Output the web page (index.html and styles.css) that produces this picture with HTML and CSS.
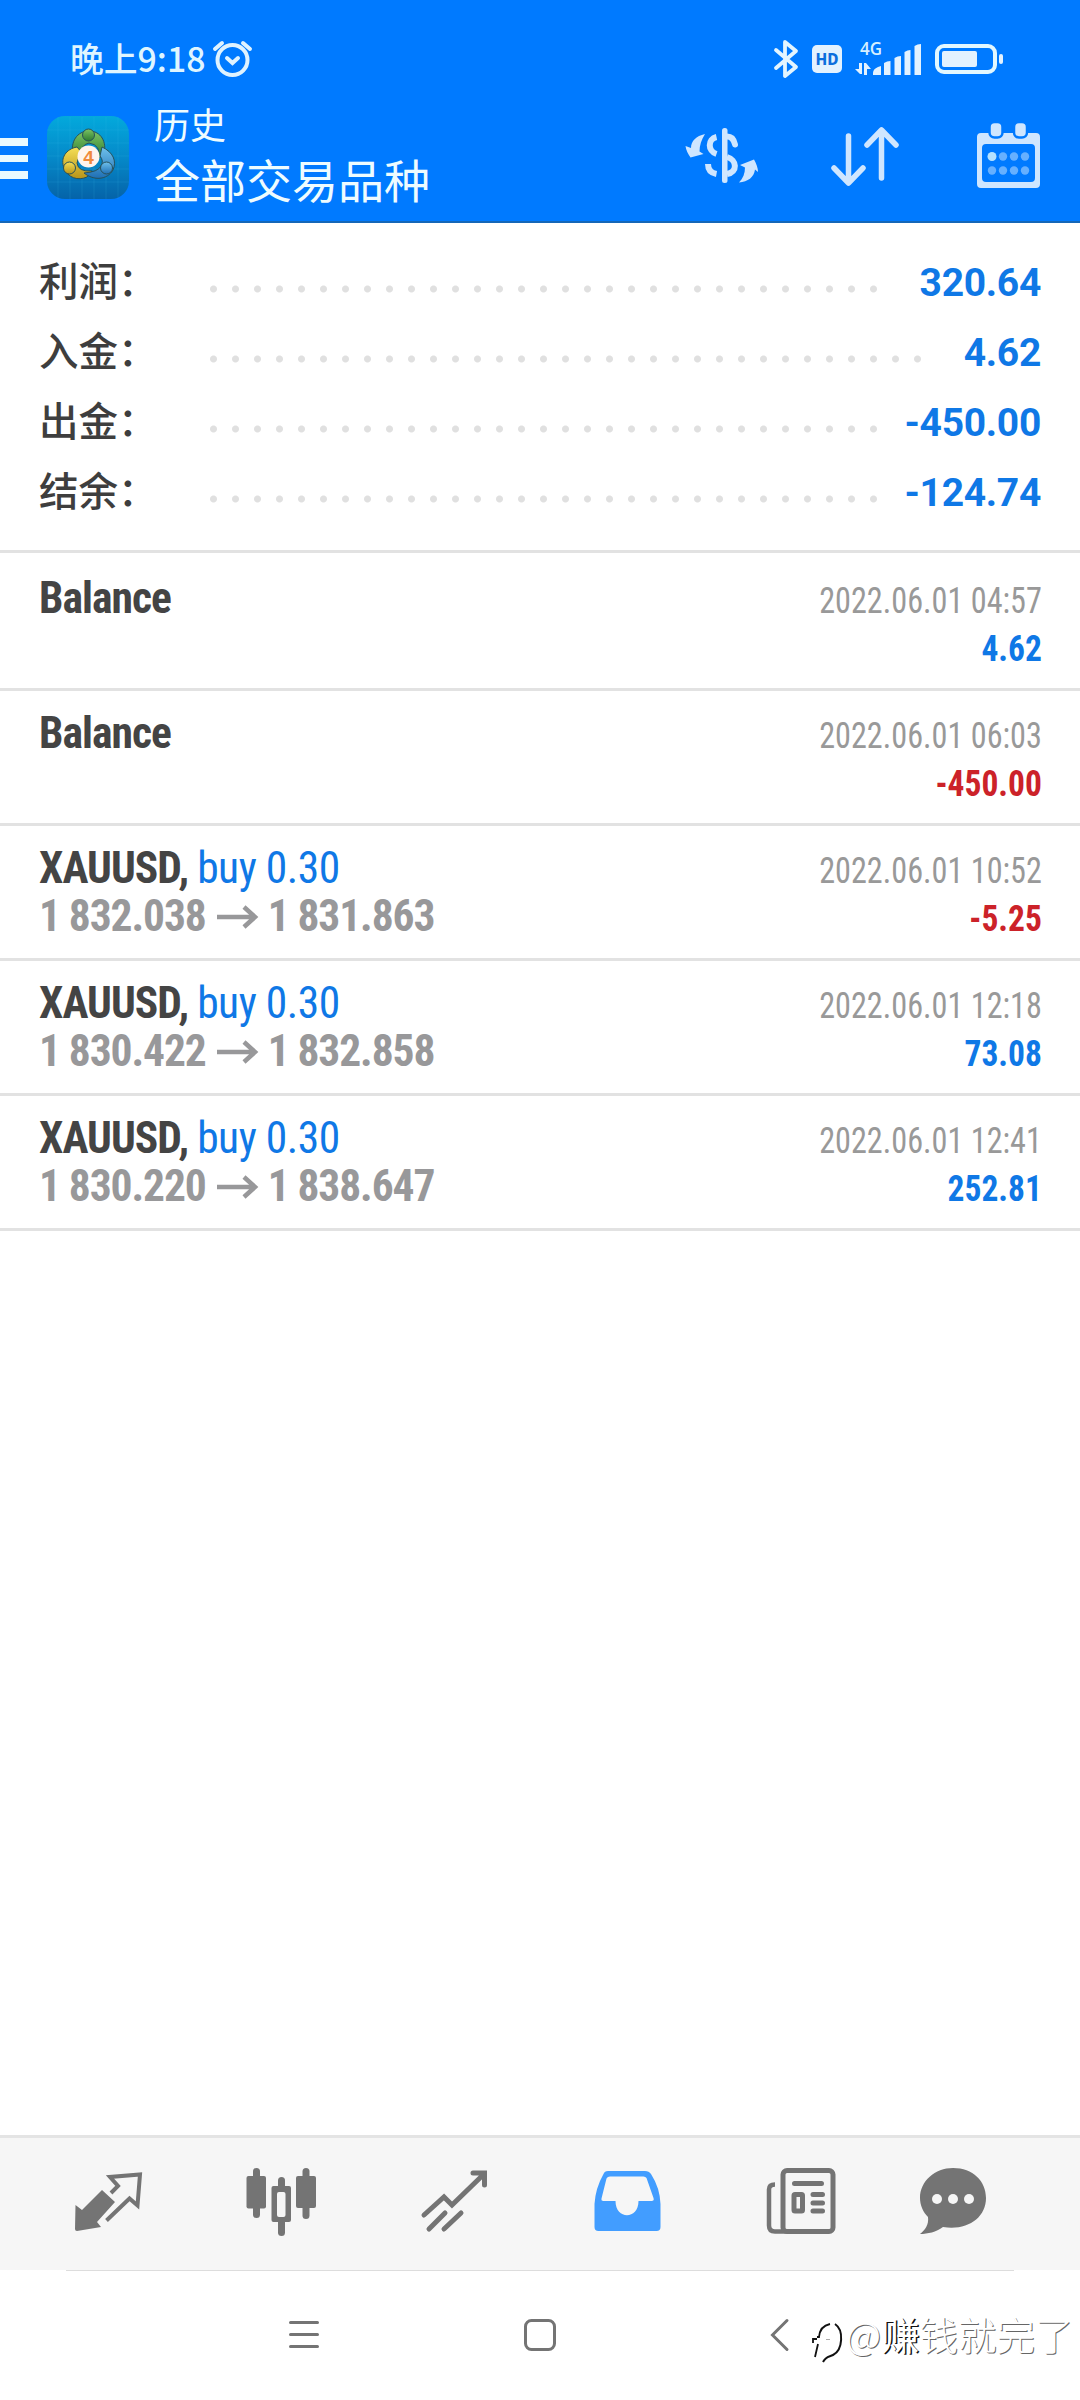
FILE: index.html
```html
<!DOCTYPE html>
<html lang="zh-CN">
<head>
<meta charset="utf-8">
<title>历史</title>
<link rel="stylesheet" href="styles.css">
</head>
<body>
<div class="screen">
  <header class="header">
    <div class="status">
      <span class="clock">晚上9:18</span>
      <svg class="alarm" width="42" height="42" viewBox="211 38 42 42" fill="none" stroke="#dff3ff" stroke-width="4" stroke-linecap="round"><circle cx="232.500" cy="60" r="15"/><path d="M227 58l5.500 5 5.500-5M215 49l7-6M243 43l7 6"/></svg>
      <svg class="signals" width="236" height="58" viewBox="770 26 236 58">
        <path d="M776 50l20 17-11 9V42l11 9-20 17" fill="none" stroke="#e3f5ff" stroke-width="3.800" stroke-linejoin="round" stroke-linecap="round"/>
        <rect x="812" y="45" width="30" height="28" rx="5" fill="#e3f2ff"/>
        <text x="827" y="65" class="hd" textLength="23" lengthAdjust="spacingAndGlyphs">HD</text>
        <text x="860" y="54.500" class="net" textLength="22" lengthAdjust="spacingAndGlyphs">4G</text>
        <g fill="#e3f2ff"><path d="M859 63h3v11h-2l-5-5h4zM864 75h3v-6h4l-5-6h-2z"/>
        <path d="M873 75v-2q0-4 5-6l3-1v9zM884 75V63q3-2 6.500-2v14zM894.500 75V58q3-2 6.500-2v19zM904.500 75V52q3-2 6-2v25zM914.500 75V46q3-2 6.500-2v31z"/></g>
        <rect x="937" y="46" width="58" height="26" rx="7" fill="none" stroke="#e3f8ff" stroke-width="4"/>
        <rect x="942" y="51" width="35" height="16" rx="2" fill="#e3f2ff"/>
        <rect x="999" y="54" width="4" height="10" rx="2" fill="#e3f2ff"/>
      </svg>
    </div>
    <div class="toolbar">
      <div class="menu"><i></i><i></i><i></i></div>
      <svg class="logo" width="84" height="84" viewBox="0 0 84 84">
        <defs>
          <linearGradient id="sky" x2="0" y2="1"><stop offset="0" stop-color="#03a9dc"/><stop offset=".5" stop-color="#0589c9"/><stop offset="1" stop-color="#0563a8"/></linearGradient>
          <linearGradient id="green" x2="0" y2="1"><stop offset="0" stop-color="#7cc465"/><stop offset="1" stop-color="#2c7b30"/></linearGradient>
          <linearGradient id="gold" x2="0" y2="1"><stop offset="0" stop-color="#f6df57"/><stop offset="1" stop-color="#b79419"/></linearGradient>
          <linearGradient id="blue" x2="0" y2="1"><stop offset="0" stop-color="#6fc1ec"/><stop offset="1" stop-color="#1f6fb4"/></linearGradient>
        </defs>
        <rect x="1" y="0" width="82" height="83" rx="18" fill="url(#sky)"/>
        <path d="M12 1v82M24 1v82M36 1v82M48 1v82M60 1v82M72 1v82M1 14h82M1 27h82M1 40h82M1 53h82M1 66h82" stroke="#49c6ee" stroke-opacity=".14" fill="none"/>
        <g stroke="#27515a" stroke-width="1" transform="translate(0 -2)">
          <path d="M27 41c-3-13 4-24 16-24s18 11 15 23l-6 5q4-14-9-16-9 2-6 11z" fill="url(#green)"/>
          <path d="M31 33c-11 2-17 11-13 21 4 10 14 13 23 9l5-6q-14 1-15-8 0-5 6-9z" fill="url(#gold)"/>
          <path d="M56 33c11 5 15 14 11 23-6 10-19 11-29 3q14-1 17-7 3-5-1-10z" fill="url(#blue)"/>
          <circle cx="42.500" cy="21" r="6" fill="url(#green)"/><circle cx="23.500" cy="54" r="6" fill="url(#gold)"/><circle cx="60.500" cy="54" r="6" fill="url(#blue)"/>
        </g>
        <circle cx="42.500" cy="40.500" r="11" fill="#fff4ed"/>
        <text x="42.500" y="47.500" class="four">4</text>
      </svg>
      <div class="titles"><div class="title">历史</div><div class="subtitle">全部交易品种</div></div>
      <svg class="actions" width="360" height="76" viewBox="684 118 360 76">
        <g fill="#cfe6ff">
          <rect x="722" y="128" width="5.500" height="55" rx="2.500"/>
          <path d="M705 134c-9 2-14 7-14 14l-5.500-2c.5 4 2.500 8 5 11.500l13-3.500-4-2.500c0-6 2-12 5.500-17.500z"/>
          <path d="M739 182.500c9-1 15-5 16-13l3 2.500c0-4-1.500-8-4-12.500l-14 5.500 5 2.500c0 6-2 11-6 15z"/>
        </g>
        <g fill="none" stroke="#cfe6ff" stroke-width="6">
          <path d="M716.500 137c-9 2-9 14 0 17M708 164c0 6 3 9 8.500 10"/>
          <path d="M727 136.500c4 0 7 3 8 8" stroke-linecap="round"/><path d="M727 157c10 3 11 15 0 17"/>
          <path d="M848.500 136v46M834 168l14.500 15 14.500-15M881.500 178v-47M867 145l14.500-15 14.500 15" stroke-width="5.500" stroke-linecap="round" stroke-linejoin="round"/>
        </g>
        <path fill="#cfe6ff" fill-rule="evenodd" d="M981 133h55a4 4 0 0 1 4 4v47a4 4 0 0 1-4 4h-55a4 4 0 0 1-4-4v-47a4 4 0 0 1 4-4zM986 144a4 4 0 0 0-4 4v30a4 4 0 0 0 4 4h45a4 4 0 0 0 4-4v-30a4 4 0 0 0-4-4z"/>
        <g fill="#cfe6ff" stroke="#007aff" stroke-width="2.500"><rect x="989.500" y="122" width="13" height="15.500" rx="5"/><rect x="1014" y="122" width="13" height="15.500" rx="5"/></g>
        <g fill="#66b0ff"><circle cx="1003" cy="156.500" r="4.200"/><circle cx="1014" cy="156.500" r="4.200"/><circle cx="1025" cy="156.500" r="4.200"/><circle cx="992" cy="170.500" r="4.200"/><circle cx="1003" cy="170.500" r="4.200"/><circle cx="1014" cy="170.500" r="4.200"/><circle cx="1025" cy="170.500" r="4.200"/></g>
        <circle cx="992" cy="156.500" r="4.500" fill="#b5e2ff"/>
      </svg>
    </div>
  </header>

  <section class="summary">
    <div class="sum"><span class="label">利润：</span><span class="dots"></span><span class="value">320.64</span></div>
    <div class="sum"><span class="label">入金：</span><span class="dots long"></span><span class="value">4.62</span></div>
    <div class="sum"><span class="label">出金：</span><span class="dots"></span><span class="value">-450.00</span></div>
    <div class="sum"><span class="label">结余：</span><span class="dots"></span><span class="value">-124.74</span></div>
  </section>

  <main class="deals">
    <div class="deal"><div class="left"><div class="name">Balance</div></div><div class="right"><div class="date">2022.06.01 04:57</div><div class="amount">4.62</div></div></div>
    <div class="deal"><div class="left"><div class="name">Balance</div></div><div class="right"><div class="date">2022.06.01 06:03</div><div class="amount loss">-450.00</div></div></div>
    <div class="deal"><div class="left"><div class="name">XAUUSD, <span class="side">buy 0.30</span></div><div class="prices">1 832.038<svg class="to" width="44" height="26" viewBox="0 0 44 26"><path d="M1 13h38M28 3l11 10-11 10"/></svg>1 831.863</div></div><div class="right"><div class="date">2022.06.01 10:52</div><div class="amount loss">-5.25</div></div></div>
    <div class="deal"><div class="left"><div class="name">XAUUSD, <span class="side">buy 0.30</span></div><div class="prices">1 830.422<svg class="to" width="44" height="26" viewBox="0 0 44 26"><path d="M1 13h38M28 3l11 10-11 10"/></svg>1 832.858</div></div><div class="right"><div class="date">2022.06.01 12:18</div><div class="amount">73.08</div></div></div>
    <div class="deal"><div class="left"><div class="name">XAUUSD, <span class="side">buy 0.30</span></div><div class="prices">1 830.220<svg class="to" width="44" height="26" viewBox="0 0 44 26"><path d="M1 13h38M28 3l11 10-11 10"/></svg>1 838.647</div></div><div class="right"><div class="date">2022.06.01 12:41</div><div class="amount">252.81</div></div></div>
  </main>

  <nav class="tabs">
    <svg class="tab" viewBox="22 2138 173 132"><path d="M75.500 2205l6.500 5 20-20 13 12-18 20 4 5-24 4q-2 0-2-2z" fill="#747474"/><path d="M111 2193l7-7-8-9 30-2.500-2.500 31-8-7-23 22" fill="none" stroke="#747474" stroke-width="4"/></svg>
    <svg class="tab" viewBox="195 2138 173 132"><g fill="#747474"><rect x="253" y="2168" width="7" height="50" rx="3.500"/><rect x="246.500" y="2176" width="19.500" height="32.500" rx="2"/><rect x="302.500" y="2168" width="7" height="51" rx="3.500"/><rect x="296" y="2176" width="20" height="32" rx="2"/><rect x="278" y="2177" width="7" height="59" rx="3.500"/><rect x="271.500" y="2186" width="19.500" height="36" rx="2"/></g><rect x="277" y="2192" width="8.500" height="25" rx="2" fill="#f6f6f6"/></svg>
    <svg class="tab" viewBox="368 2138 173 132"><path d="M424 2215l20-18 8 8 32-31M473 2173h11.500v12M429 2229l16-16M444 2229l17-16" fill="none" stroke="#747474" stroke-width="5" stroke-linecap="round"/></svg>
    <svg class="tab" viewBox="541 2138 173 132"><path fill="#429dff" fill-rule="evenodd" d="M608 2171h37q4 0 6 3 9 14 9.500 30v23q0 4-4 4h-58q-4 0-4-4v-23q1-16 9-30 1-3 4.500-3zM610 2176.500q-2.500 0-3.500 2l-5 20q-.500 2.500 2 2.500h12c0 19 23 19 23 0h13q3 0 2-3l-7-20q-1-1.500-3-1.500z"/></svg>
    <svg class="tab" viewBox="714 2138 173 132"><g fill="none" stroke="#747474"><rect x="783" y="2170.500" width="50" height="61" rx="4" stroke-width="5"/><path d="M775 2184.500q-6 0-6 5v36q0 6 6 6h12" stroke-width="4.500"/><path d="M794.500 2183.500h27M813 2194.500h9.500M813 2203h9.500M813 2211h9.500" stroke-width="5" stroke-linecap="round"/><rect x="794" y="2194.500" width="8.500" height="16.500" rx="1" stroke-width="5"/></g></svg>
    <svg class="tab last" viewBox="887 2138 132 132"><path fill="#747474" d="M953 2168c20 0 33 13 33 30 0 20-19 33-43 29-7 5-15 7-23 7 5-4 9-9 8-17-5-5-8-12-8-19 0-17 15-30 33-30z"/><g fill="#f6f6f6"><circle cx="937" cy="2199" r="5"/><circle cx="953" cy="2199" r="5"/><circle cx="969" cy="2199" r="5"/></g></svg>
  </nav>

  <footer class="system">
    <svg width="32" height="34" viewBox="288 2318 32 34"><path d="M290.500 2322.500h27M290.500 2334.500h27M290.500 2346.500h27" stroke="#747474" stroke-width="3" stroke-linecap="round"/></svg>
    <svg width="34" height="34" viewBox="523 2318 34 34"><rect x="525.500" y="2320.500" width="29" height="29" rx="6" fill="none" stroke="#747474" stroke-width="3"/></svg>
    <svg width="22" height="34" viewBox="769 2318 22 34"><path d="M787 2320.500l-14.500 14.500 14.500 14.500" fill="none" stroke="#747474" stroke-width="3" stroke-linecap="round"/></svg>
    <div class="watermark">
      <svg width="32" height="50" viewBox="811 2314 32 50" fill="none" stroke="#111"><path d="M830 2324q-10 2-11 13h-2M813 2343v-4h4M818 2344l-3 13" stroke-width="1.800"/><path d="M835 2324c9 6 8 26-2 31-4 2-7 1-10 7" stroke-width="2"/><path d="M826 2339.500h4" stroke="#aaa"/></svg>
      <span>@<b>赚</b>钱就完了</span>
    </div>
  </footer>
</div>
</body>
</html>
```
FILE: styles.css
```css
* { box-sizing: border-box; }
body { margin: 0; background: #fff; }
.screen { width: 1080px; height: 2400px; display: flex; flex-direction: column; overflow: hidden; font-family: Roboto, "Noto Sans CJK SC", sans-serif; }
svg { display: block; flex: none; }

.header { height: 223px; background: #007aff; border-bottom: 2px solid #1667b8; color: #eefcff; font-family: "Noto Sans CJK SC", sans-serif; }
.status { height: 106px; padding: 38px 74px 0 70px; display: flex; align-items: flex-start; }
.clock { font-size: 33.800px; line-height: 40px; font-weight: 500; color: #dff5ff; width: 141px; white-space: nowrap; }
.signals { margin: -12px 0 0 auto; }
.hd { font: 800 16px "Noto Sans", sans-serif; fill: #0d6fdd; text-anchor: middle; }
.net { font: 600 18px "Open Sans", sans-serif; fill: #d6f0ff; }
.toolbar { height: 115px; display: flex; align-items: flex-start; padding-right: 36px; }
.menu { width: 46px; padding-top: 32px; display: flex; flex-direction: column; gap: 9px; }
.menu i { width: 27.500px; height: 7.700px; background: #e9faff; }
.logo { margin-top: 10px; }
.four { font: 700 19px "Liberation Sans", sans-serif; fill: #f08a3c; text-anchor: middle; }
.titles { margin-left: 24px; flex: 1; }
.title { font-size: 36px; line-height: 35px; }
.subtitle { font-size: 46px; line-height: 54px; margin-top: 10px; white-space: nowrap; }
.actions { margin-top: 12px; }

.summary { height: 330px; padding: 23px 39px 0 39px; border-bottom: 3px solid #e2e2e2; }
.sum { height: 70px; display: flex; align-items: center; }
.label { width: 171px; height: 70px; font: 500 39.500px/66px "Noto Sans CJK SC", sans-serif; color: #3e3e3e; white-space: nowrap; }
.dots { width: 682px; height: 8px; margin-top: 16px; background: radial-gradient(circle at 3.500px 4px, #e0e0e0 3px, transparent 4px) 0 0 / 22px 8px repeat-x; }
.dots.long { width: 726px; }
.value { margin-left: auto; padding-top: 3px; font-size: 39px; font-weight: 700; letter-spacing: -.3px; color: #0f78e6; }

.deals { flex: 1; padding-top: 3px; }
.deal { height: 135px; padding: 19px 38px 0 39px; border-bottom: 3px solid #e2e2e2; display: flex; justify-content: space-between; font-family: "Roboto Condensed", Roboto, sans-serif; font-stretch: 75%; white-space: nowrap; }
.name, .prices { font-size: 43.500px; line-height: 48px; font-weight: 700; letter-spacing: -1.100px; color: #444; }
.name { letter-spacing: -.950px; }
.side { font-weight: 400; letter-spacing: -.500px; color: #0f78e6; }
.prices { display: flex; align-items: center; color: #98989a; }
.to { margin: 0 8px 0 10px; fill: none; stroke: #98989a; stroke-width: 4.500; }
.right { text-align: right; padding-top: 2px; }
.date, .amount { font-size: 36px; line-height: 48px; color: #999; }
.date { transform: scaleX(.895); transform-origin: right; }
.amount { font-weight: 700; color: #0f78e6; transform: scaleX(.93); transform-origin: right; }
.amount.loss { color: #cc2229; }

.tabs { height: 135px; padding-left: 22px; border-top: 3px solid #e4e4e4; background: #f6f6f6; display: flex; }
.tab { width: 173px; height: 132px; }
.tab.last { width: 132px; }
.system { height: 130px; display: flex; align-items: flex-start; padding: 48px 0 0 288px; background: linear-gradient(#ddd, #ddd) 66px 0 / 948px 1px no-repeat; }
.system > svg:nth-child(2) { margin-left: 203px; }
.system > svg:nth-child(3) { margin-left: 212px; }
.watermark { display: flex; align-items: flex-start; margin: -4px 0 0 20px; font: 300 38.500px/38px "Noto Sans CJK SC", sans-serif; color: #fff; text-shadow: 1px 1px 0 #666; white-space: nowrap; }
.watermark span { margin-left: 3px; }
.watermark b { font-weight: 400; text-shadow: 1.500px 1px 0 #111; }
```
